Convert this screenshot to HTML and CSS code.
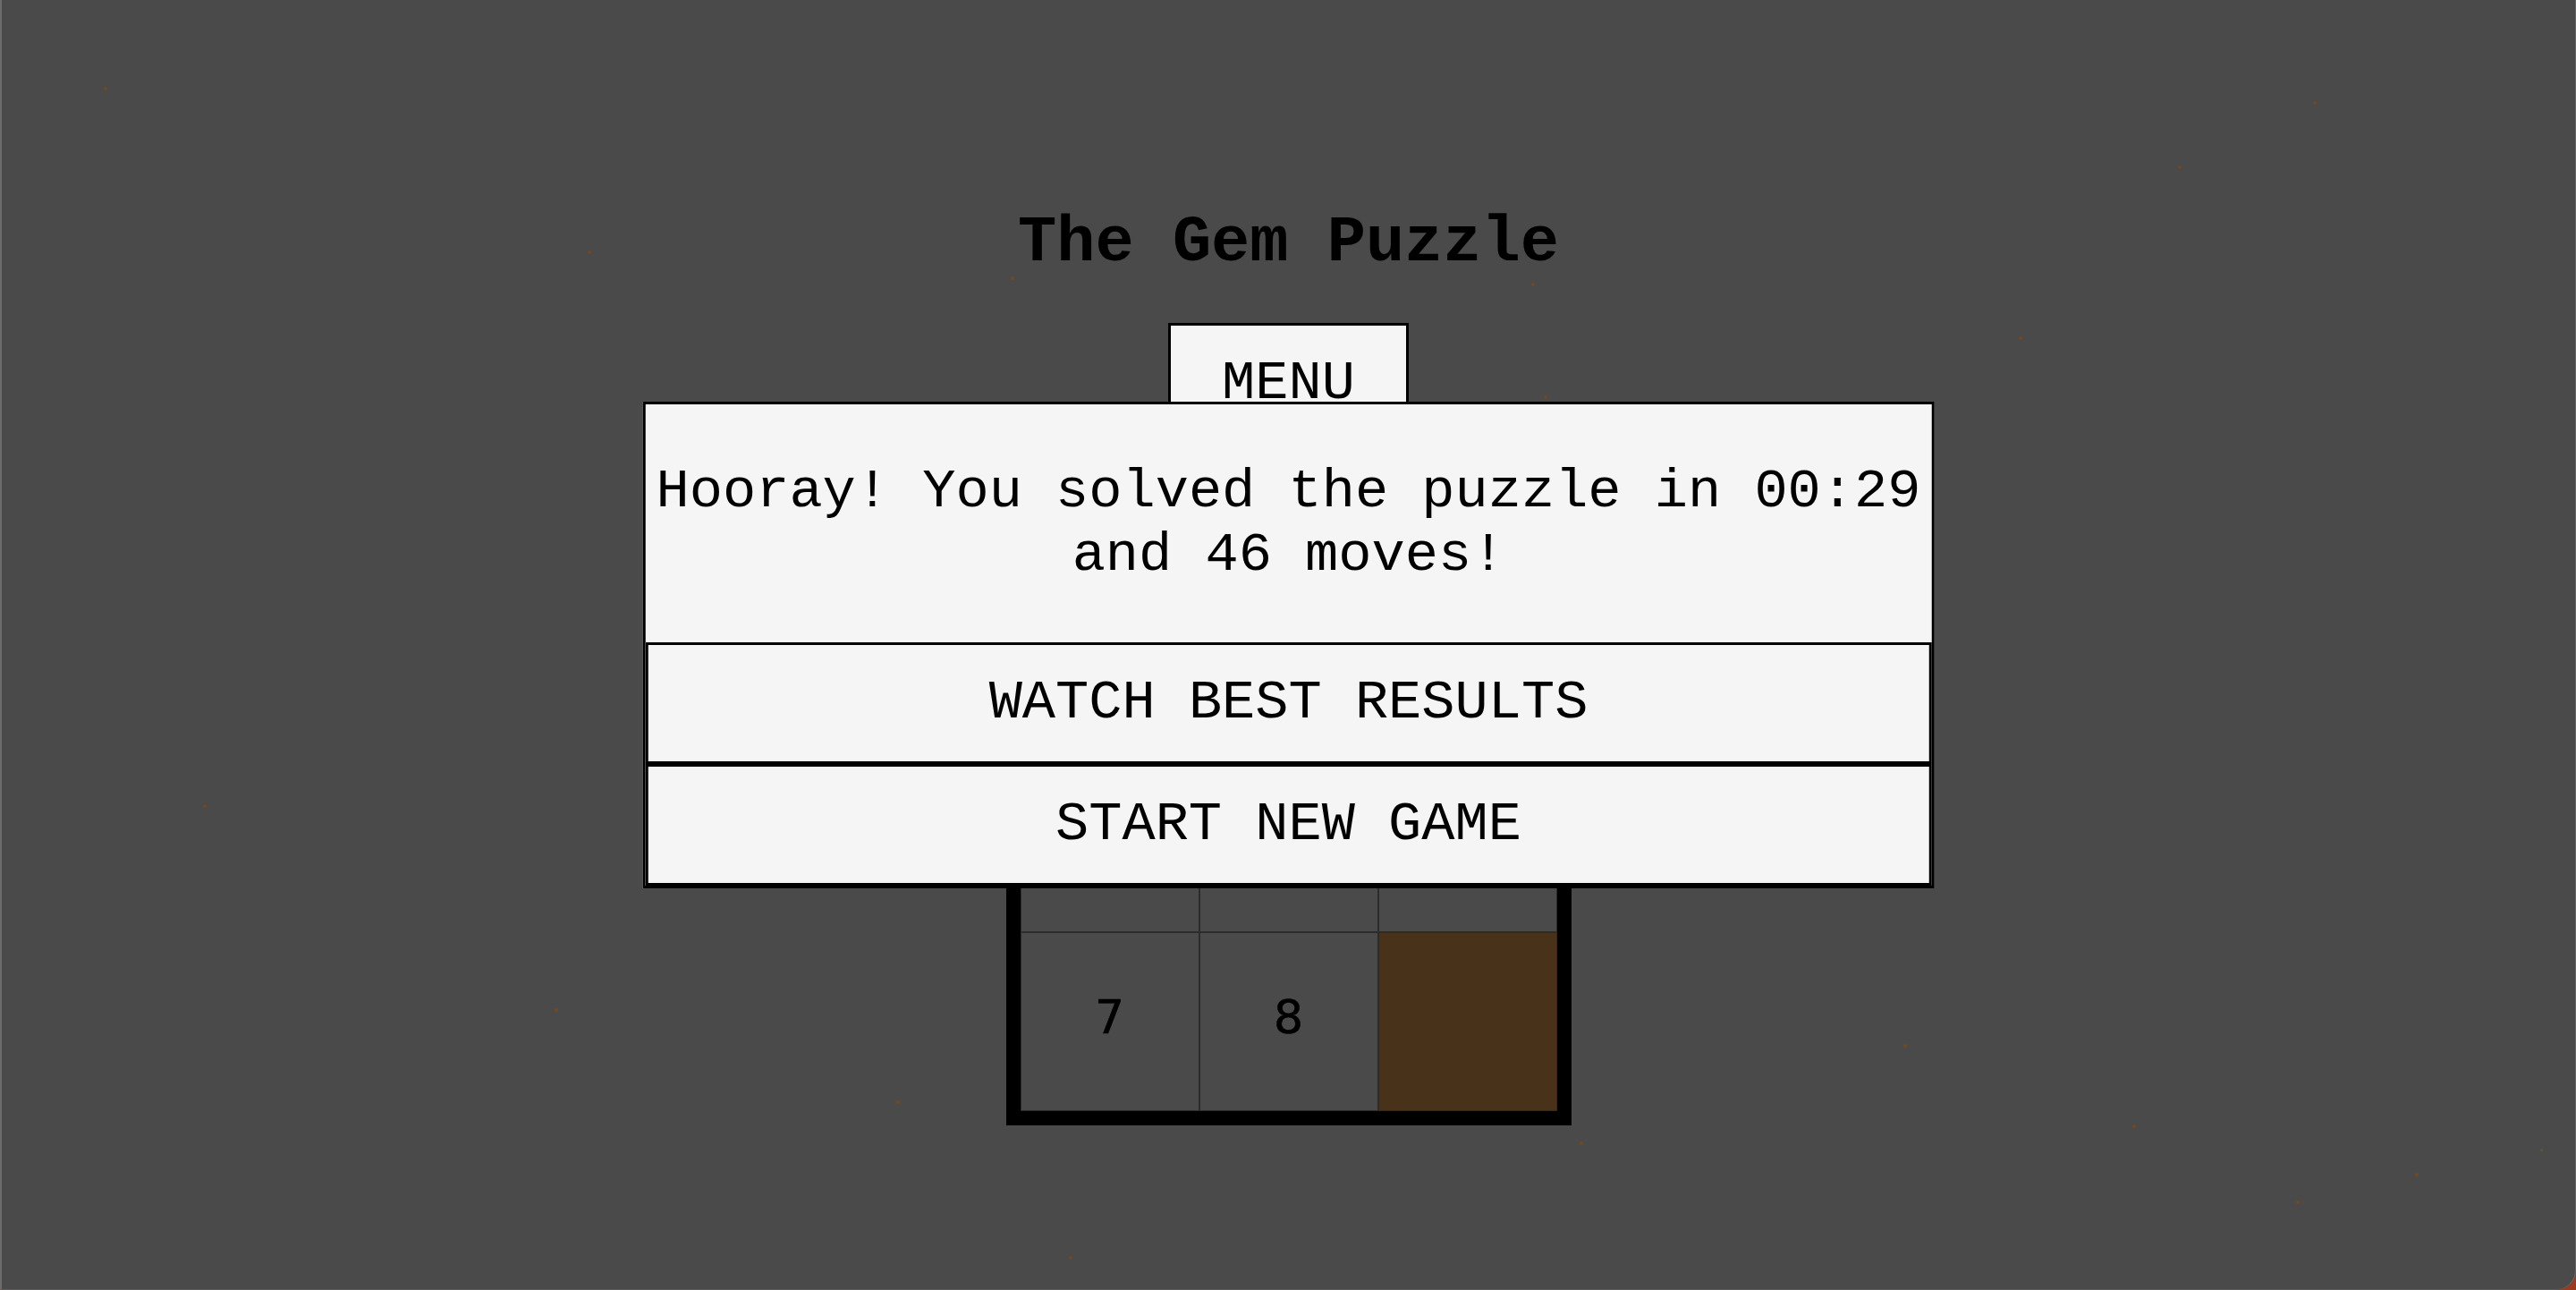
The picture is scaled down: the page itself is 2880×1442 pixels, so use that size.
FILE: index.html
```html
<!DOCTYPE html>
<html lang="en">
<head>
<meta charset="utf-8">
<title>The Gem Puzzle</title>
<link rel="stylesheet" href="styles.css">
</head>
<body>
<div class="window">
  <span class="dot" style="left:114px;top:97px"></span>
  <span class="dot" style="left:655px;top:280px"></span>
  <span class="dot" style="left:1128px;top:309px"></span>
  <span class="dot" style="left:1710px;top:316px"></span>
  <span class="dot" style="left:1724px;top:442px"></span>
  <span class="dot" style="left:2255px;top:376px"></span>
  <span class="dot" style="left:2433px;top:185px"></span>
  <span class="dot" style="left:2584px;top:113px"></span>
  <span class="dot" style="left:2698px;top:1311px"></span>
  <span class="dot faint" style="left:2838px;top:1284px"></span>
  <span class="dot" style="left:2126px;top:1167px"></span>
  <span class="dot" style="left:1000px;top:1230px"></span>
  <span class="dot" style="left:618px;top:1127px"></span>
  <span class="dot" style="left:225px;top:899px"></span>
  <span class="dot" style="left:1193px;top:1404px"></span>
  <span class="dot" style="left:1764px;top:1276px"></span>
  <span class="dot" style="left:2382px;top:1257px"></span>
  <span class="dot" style="left:2565px;top:1342px"></span>

  <main class="app">
    <h1 class="title">The Gem Puzzle</h1>
    <button class="menu-btn" type="button">MENU</button>
    <div class="board">
      <div class="tile"></div>
      <div class="tile"></div>
      <div class="tile"></div>
      <div class="tile"></div>
      <div class="tile"></div>
      <div class="tile"></div>
      <div class="tile">7</div>
      <div class="tile">8</div>
      <div class="tile empty"></div>
    </div>
  </main>

  <div class="modal">
    <p class="message">Hooray! You solved the puzzle in 00:29 and 46 moves!</p>
    <button class="modal-btn" type="button">WATCH BEST RESULTS</button>
    <button class="modal-btn" type="button">START NEW GAME</button>
  </div>
</div>
</body>
</html>
```

FILE: styles.css
```css
* {
  box-sizing: border-box;
}

html {
  margin: 0;
  background: #9a3a1e;
}

body {
  margin: 0;
  font-family: "Liberation Mono", "Courier New", monospace;
}

.window {
  position: relative;
  width: 100%;
  height: 100vh;
  overflow: hidden;
  background: #4a4a4a;
  border-left: 2px solid #6c6c6c;
  border-right: 1px solid #666666;
  border-bottom: 1px solid #5c5c5c;
  border-bottom-right-radius: 22px;
}

.dot {
  position: absolute;
  width: 4px;
  height: 4px;
  border-radius: 50%;
  background: #73491f;
}

.dot.faint {
  background: #5a5a3a;
  width: 3px;
  height: 3px;
}

.app {
  display: flex;
  flex-direction: column;
  align-items: center;
  padding-top: 231px;
}

.title {
  margin: 0;
  font-family: "Liberation Mono", "Courier New", monospace;
  font-weight: 700;
  font-size: 72px;
  line-height: normal;
  color: #000;
}

.menu-btn {
  margin-top: 48px;
  padding: 28.5px 57.5px;
  border: 3px solid #000;
  background: #f5f5f5;
  color: #000;
  font-family: "Liberation Mono", "Courier New", monospace;
  font-size: 62px;
  line-height: normal;
}

.board {
  margin-top: 131px;
  display: grid;
  grid-template-columns: repeat(3, 200px);
  grid-template-rows: repeat(3, 200px);
  border: 16px solid #000;
  background: #4a4a4a;
}

.tile {
  display: flex;
  align-items: center;
  justify-content: center;
  padding-bottom: 10px;
  border: 1px solid #2c2c2c;
  background: #4a4a4a;
  color: #000;
  font-family: "DejaVu Sans", "Liberation Sans", sans-serif;
  font-size: 52px;
  -webkit-text-stroke: 0.6px #000;
}

.tile.empty {
  background: #48321a;
  border-color: #3a2814;
}

.modal {
  position: absolute;
  top: 50%;
  left: 50%;
  transform: translate(-50%, -50%);
  width: calc(50% + 6px);
  border: 3px solid #000;
  background: #f5f5f5;
  display: flex;
  flex-direction: column;
}

.message {
  margin: 62px 0;
  text-align: center;
  font-size: 62px;
  line-height: 71px;
  color: #000;
}

.modal-btn {
  display: block;
  width: 100%;
  margin: 0;
  padding: 29.5px 0;
  border: 3px solid #000;
  background: #f5f5f5;
  color: #000;
  font-family: "Liberation Mono", "Courier New", monospace;
  font-size: 62px;
  line-height: normal;
  text-align: center;
}
```
